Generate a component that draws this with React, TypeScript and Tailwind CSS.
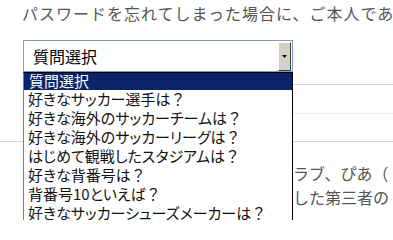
const questions = [
  "好きなサッカー選手は？",
  "好きな海外のサッカーチームは？",
  "好きな海外のサッカーリーグは？",
  "はじめて観戦したスタジアムは？",
  "好きな背番号は？",
  "背番号10といえば？",
  "好きなサッカーシューズメーカーは？",
  "好きなサッカー選手の出身国は？",
];

export default function App() {
  return (
    <div className="relative w-[393px] h-[220px] overflow-hidden bg-white font-['Noto_Sans_CJK_JP','Noto_Sans',sans-serif]">
      <p className="pl-[22px] pt-[2px] text-[16px] leading-[22px] tracking-[1px] text-[#555] whitespace-nowrap">
        パスワードを忘れてしまった場合に、ご本人であることを確認するための質問です。
      </p>

      <div className="relative z-10 ml-[23px] mt-[16px] w-[270px]">
        <div className="flex h-[32px] items-center border border-[#7f9db9] bg-white">
          <span className="flex-1 pl-[9px] text-[16px] leading-none text-black [font-feature-settings:'palt']">質問選択</span>
          <div className="mr-[1px] flex h-[29px] w-[13px] items-center justify-center border border-t-white border-l-white border-r-[#404040] border-b-[#404040] bg-[#d4d0c8]">
            <svg width="5" height="3" viewBox="0 0 5 3">
              <path d="M0 0h5L2.5 3z" fill="#000" />
            </svg>
          </div>
        </div>
        <ul className="absolute left-0 top-full w-[270px] border border-black border-l-[#808080] bg-white text-[15px] text-[#111] [font-feature-settings:'palt']">
          <li className="flex h-[17px] items-center bg-[#0a246a] pl-[5px] text-white">質問選択</li>
          {questions.map((q) => (
            <li key={q} className="flex h-[19px] items-center pl-[4px] whitespace-nowrap">
              {q.replace("？", "")}
              <span className="[font-feature-settings:normal]">？</span>
            </li>
          ))}
        </ul>
      </div>

      <div className="mt-[12px] ml-[23px] border-b border-[#dcdcdc]" />
      <div className="mt-[28px] ml-[23px] border-b border-[#eeeeee]" />
      <div className="mt-[27px] border-b border-[#d6d6d6]" />

      <div className="flex pt-[19px] text-[16px] leading-[24px] text-[#555]">
        <div className="w-[293px] shrink-0" />
        <div className="whitespace-nowrap">
          <p>ラブ、ぴあ（</p>
          <p>した第三者の</p>
        </div>
      </div>
    </div>
  );
}
